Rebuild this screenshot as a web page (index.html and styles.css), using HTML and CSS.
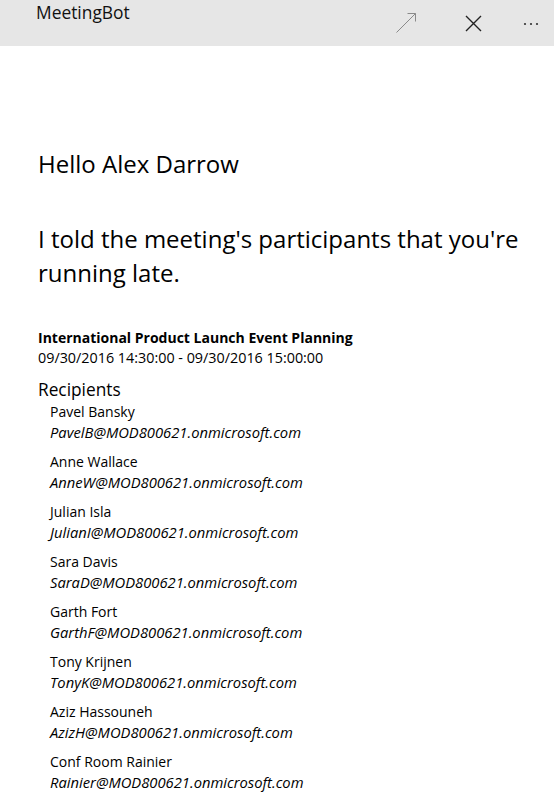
FILE: index.html
```html
<!DOCTYPE html>
<html>
<head>
<meta charset="utf-8">
<link rel="stylesheet" href="styles.css">
</head>
<body>
<div class="titlebar">
  <div class="app-name">MeetingBot</div>
  <div class="actions">
    <svg class="icon expand" width="22" height="22" viewBox="0 0 22 22"><path d="M1.5 20.5 L20.5 1.5 M12.5 1.5 H20.5 V9.5" fill="none" stroke="#8a8a8a" stroke-width="1"/></svg>
    <svg class="icon close" width="17" height="17" viewBox="0 0 17 17"><path d="M1 1 L16 16 M16 1 L1 16" fill="none" stroke="#222" stroke-width="1.4"/></svg>
    <svg class="icon more" width="16" height="4" viewBox="0 0 16 4"><circle cx="2" cy="2" r="1.1" fill="#333"/><circle cx="8" cy="2" r="1.1" fill="#333"/><circle cx="14" cy="2" r="1.1" fill="#333"/></svg>
  </div>
</div>
<main class="content">
  <h1 class="greeting">Hello Alex Darrow</h1>
  <p class="message">I told the meeting's participants that you're running late.</p>
  <div class="meeting">
    <div class="meeting-title">International Product Launch Event Planning</div>
    <div class="meeting-time">09/30/2016 14:30:00 - 09/30/2016 15:00:00</div>
  </div>
  <div class="recipients-label">Recipients</div>
  <ul class="recipients">
    <li><span class="name">Pavel Bansky</span><span class="email">PavelB@MOD800621.onmicrosoft.com</span></li>
    <li><span class="name">Anne Wallace</span><span class="email">AnneW@MOD800621.onmicrosoft.com</span></li>
    <li><span class="name">Julian Isla</span><span class="email">JulianI@MOD800621.onmicrosoft.com</span></li>
    <li><span class="name">Sara Davis</span><span class="email">SaraD@MOD800621.onmicrosoft.com</span></li>
    <li><span class="name">Garth Fort</span><span class="email">GarthF@MOD800621.onmicrosoft.com</span></li>
    <li><span class="name">Tony Krijnen</span><span class="email">TonyK@MOD800621.onmicrosoft.com</span></li>
    <li><span class="name">Aziz Hassouneh</span><span class="email">AzizH@MOD800621.onmicrosoft.com</span></li>
    <li><span class="name">Conf Room Rainier</span><span class="email">Rainier@MOD800621.onmicrosoft.com</span></li>
  </ul>
</main>
</body>
</html>
```

FILE: styles.css
```css
html, body {
  margin: 0;
  padding: 0;
  background: #ffffff;
  color: #000000;
  font-family: "Open Sans", "Noto Sans", sans-serif;
  overflow: hidden;
}
.titlebar {
  height: 46px;
  background: #e6e6e6;
  display: flex;
  justify-content: space-between;
  align-items: flex-start;
}
.app-name {
  font-size: 17.4px;
  line-height: 24px;
  padding-left: 36px;
  color: #111;
}
.actions {
  display: flex;
  align-items: center;
  height: 46px;
}
.icon { display: block; }
.expand { margin-right: 48px; margin-top: -1px; }
.close { margin-right: 41px; }
.more { margin-right: 15px; margin-top: 2px; }
.content {
  padding: 0 30px 0 38px;
}
.greeting {
  font-weight: normal;
  font-size: 24px;
  line-height: 32px;
  margin: 102px 0 0;
}
.message {
  font-size: 24px;
  line-height: 34px;
  margin: 42px 0 0;
}
.meeting { margin-top: 38px; }
.meeting-title {
  font-weight: bold;
  font-size: 14px;
  line-height: 20px;
}
.meeting-time {
  font-size: 14.35px;
  line-height: 20px;
}
.recipients-label {
  font-size: 17.3px;
  line-height: 24px;
  margin-top: 10px;
}
.recipients {
  list-style: none;
  margin: 0;
  padding: 0 0 0 12px;
  display: flex;
  flex-direction: column;
  gap: 10px;
}
.recipients li { display: flex; flex-direction: column; }
.name { font-size: 14px; line-height: 20px; }
.email { font-size: 14.75px; line-height: 20px; font-style: italic; }
```
